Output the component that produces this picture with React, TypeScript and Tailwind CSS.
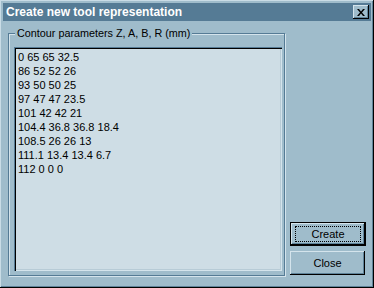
const rows = [
  '0 65 65 32.5',
  '86 52 52 26',
  '93 50 50 25',
  '97 47 47 23.5',
  '101 42 42 21',
  '104.4 36.8 36.8 18.4',
  '108.5 26 26 13',
  '111.1 13.4 13.4 6.7',
  '112 0 0 0',
]

const Button = ({ label, isDefault }: { label: string; isDefault?: boolean }) => {
  if (isDefault) {
    return (
      <div className="w-[76px] h-[24px] border border-black">
        <div className="h-full flex items-center justify-center shadow-[inset_-1px_-1px_#000,inset_1px_1px_#d4e4ec,inset_-2px_-2px_#5f8399]">
          <div className="w-[66px] h-[16px] border border-dotted border-black flex items-center justify-center text-black">
            {label}
          </div>
        </div>
      </div>
    )
  }
  return (
    <div className="w-[75px] h-[24px] flex items-center justify-center text-black shadow-[inset_-1px_-1px_#000,inset_1px_1px_#d4e4ec,inset_-2px_-2px_#5f8399]">
      {label}
    </div>
  )
}

const App = () => {
  return (
    <div className="w-[374px] h-[288px] bg-[#9fbccb] p-[3px] flex flex-col font-['Liberation_Sans',Arial,sans-serif] text-[11px] shadow-[inset_-1px_-1px_#000,inset_1px_1px_#c9dce6,inset_-2px_-2px_#5f8399]">
      <div className="h-[18px] bg-[#557b95] flex items-center justify-between pl-[3px] pr-[2px]">
        <span className="text-white font-bold text-[12px] leading-none">Create new tool representation</span>
        <div className="w-[16px] h-[14px] bg-[#9fbccb] flex items-center justify-center shadow-[inset_-1px_-1px_#000,inset_1px_1px_#d4e4ec,inset_-2px_-2px_#5f8399]">
          <svg width="8" height="7" viewBox="0 0 8 7">
            <path d="M0 0h2l2 2.5L6 0h2L5 3.5 8 7H6L4 4.5 2 7H0l3-3.5z" fill="#000" />
          </svg>
        </div>
      </div>
      <div className="flex-1 flex items-end pl-[5px] pt-[12px] pb-[9px]">
        <div className="relative w-[277px] h-[243px] border border-[#557b95] shadow-[inset_1px_1px_#d4e4ec,1px_1px_#d4e4ec] pl-[5px] pt-[13px]">
          <span className="absolute left-[6px] top-[-8px] px-[2px] bg-[#9fbccb] text-black text-[10.8px] leading-[14px]">
            Contour parameters Z, A, B, R (mm)
          </span>
          <div className="w-[268px] h-[224px] bg-[#cedde5] shadow-[inset_1px_1px_#557b95,inset_2px_2px_#000,inset_-1px_-1px_#d4e4ec,inset_-2px_-2px_#b7cbd6] pl-[4px] pt-[3px] text-black leading-[14px]">
            {rows.map((r) => (
              <div key={r}>{r}</div>
            ))}
          </div>
        </div>
        <div className="ml-[5px] mb-[1px] flex flex-col gap-[5px] items-start">
          <Button label="Create" isDefault />
          <Button label="Close" />
        </div>
      </div>
    </div>
  )
}

export default App
